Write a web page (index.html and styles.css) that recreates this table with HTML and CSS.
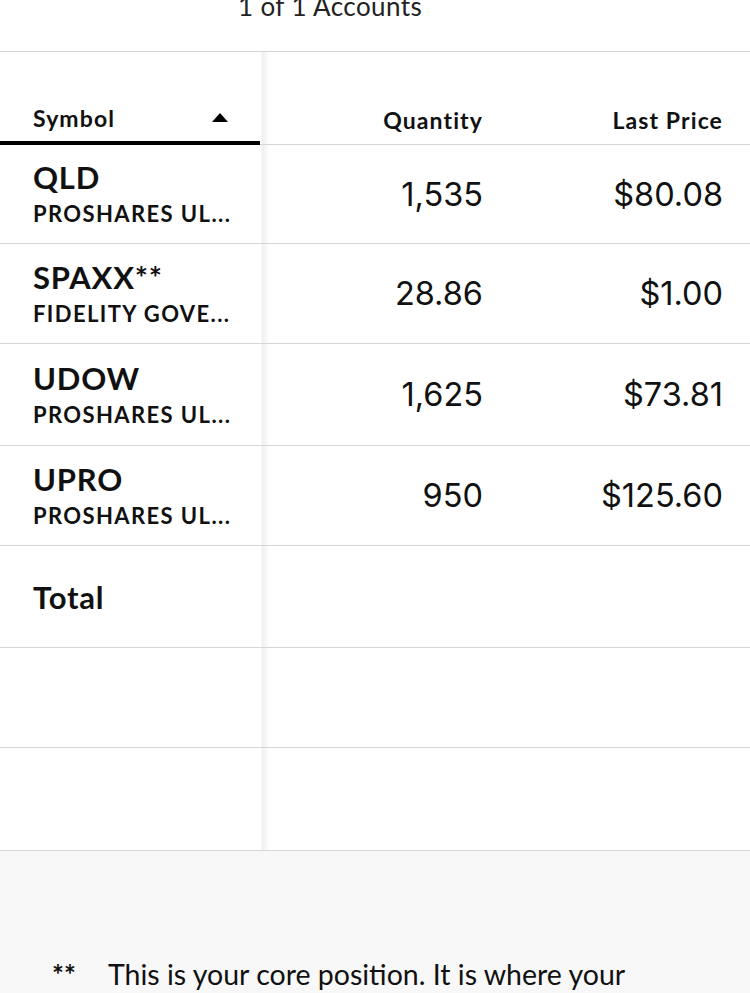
FILE: index.html
```html
<!DOCTYPE html>
<html>
<head>
<meta charset="utf-8">
<link rel="stylesheet" href="styles.css">
</head>
<body>
<div class="top"><span class="title">1 of 1 Accounts</span></div>
<div class="table">
  <div class="row head">
    <div class="cell sym sorted"><span>Symbol</span><span class="tri"></span></div>
    <div class="cell num">Quantity</div>
    <div class="cell num">Last Price</div>
  </div>
  <div class="row">
    <div class="cell sym"><div class="ticker">QLD</div><div class="desc">PROSHARES UL...</div></div>
    <div class="cell num val">1,535</div>
    <div class="cell num val">$80.08</div>
  </div>
  <div class="row">
    <div class="cell sym"><div class="ticker">SPAXX**</div><div class="desc">FIDELITY GOVE...</div></div>
    <div class="cell num val">28.86</div>
    <div class="cell num val">$1.00</div>
  </div>
  <div class="row">
    <div class="cell sym"><div class="ticker">UDOW</div><div class="desc">PROSHARES UL...</div></div>
    <div class="cell num val">1,625</div>
    <div class="cell num val">$73.81</div>
  </div>
  <div class="row">
    <div class="cell sym"><div class="ticker">UPRO</div><div class="desc">PROSHARES UL...</div></div>
    <div class="cell num val">950</div>
    <div class="cell num val">$125.60</div>
  </div>
  <div class="row">
    <div class="cell sym"><div class="ticker">Total</div></div>
    <div class="cell num val"></div>
    <div class="cell num val"></div>
  </div>
  <div class="row"><div class="cell sym"></div><div class="cell"></div><div class="cell"></div></div>
  <div class="row"><div class="cell sym"></div><div class="cell"></div><div class="cell"></div></div>
</div>
<div class="footer">
  <div class="note"><span class="mark">**</span><span class="text">This is your core position. It is where your</span></div>
</div>
</body>
</html>
```
FILE: styles.css
```css
html, body {
  margin: 0;
  padding: 0;
  background: #ffffff;
  color: #111;
  font-family: Lato, "Open Sans", sans-serif;
}
body {
  width: 750px;
  height: 993px;
  overflow: hidden;
  display: flex;
  flex-direction: column;
}
.top {
  height: 51px;
  flex: none;
  border-bottom: 1px solid #d4d4d4;
  display: flex;
  justify-content: center;
  align-items: flex-start;
  padding-right: 90px;
}
.title {
  font-family: Lato, sans-serif;
  font-weight: 400;
  font-size: 26px;
  line-height: 30px;
  letter-spacing: 0.4px;
  margin-top: -9px;
  color: #222;
}
.table {
  flex: none;
  background-image: linear-gradient(to right, transparent 261px, #efefef 262px, #f7f7f7 266px, transparent 269px);
}
.row {
  display: grid;
  grid-template-columns: 260px 250px 240px;
  height: 100px;
  border-bottom: 1px solid #d6d6d6;
}
.row:nth-child(2) { height: 98px; }
.row:nth-child(3) { height: 99px; }
.row:nth-child(4) { height: 101px; }
.row:nth-child(5) { height: 99px; }
.row:nth-child(6) { height: 101px; }
.row:nth-child(7) { height: 99px; }
.row:nth-child(8) { height: 102px; }
.row.head {
  height: 92px;
}
.cell {
  display: flex;
  flex-direction: column;
  justify-content: center;
}
.sym {
  padding-left: 33px;
}
.num {
  align-items: flex-end;
  padding-right: 27px;
}
.head .cell {
  justify-content: flex-end;
  padding-bottom: 10px;
  font-size: 23px;
  font-weight: 700;
  letter-spacing: 1.1px;
}
.head .sym {
  flex-direction: row;
  align-items: flex-end;
  justify-content: space-between;
  padding-right: 32px;
  padding-bottom: 9px;
  border-bottom: 4px solid #000;
  margin-bottom: -1px;
}
.tri {
  width: 0;
  height: 0;
  border-left: 8px solid transparent;
  border-right: 8px solid transparent;
  border-bottom: 9px solid #000;
  margin-bottom: 10px;
}
.ticker {
  font-size: 31px;
  font-weight: 700;
  line-height: 32px;
  letter-spacing: 0.8px;
}
.desc {
  font-size: 22px;
  font-weight: 700;
  line-height: 26px;
  letter-spacing: 1.4px;
  margin-top: 8px;
}
.val {
  font-family: Inter, Roboto, sans-serif;
  font-size: 32.5px;
  font-weight: 400;
  color: #111;
}
.footer {
  flex: 1;
  min-height: 0;
  overflow: hidden;
  background: #f8f8f8;
  padding-top: 106px;
  box-sizing: border-box;
}
.note {
  display: flex;
  align-items: baseline;
  padding-left: 52px;
}
.mark {
  width: 56px;
  font-size: 28px;
  font-weight: 700;
}
.text {
  font-family: Lato, sans-serif;
  font-size: 28.5px;
  font-weight: 400;
  color: #111;
}
```
